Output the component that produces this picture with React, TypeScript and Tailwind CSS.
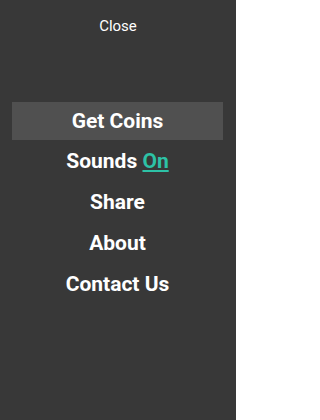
import { useState } from 'react';

const items = ['Get Coins', 'Sounds', 'Share', 'About', 'Contact Us'];

export default function App() {
    const [soundOn, setSoundOn] = useState(true);

    return (
        <div className="w-[236px] h-[420px] bg-[#383838] flex flex-col text-white font-['Roboto',sans-serif]">
            {/* Close */}
            <button className="mt-[16px] h-[20px] leading-[20px] text-[15px] self-center">Close</button>

            {/* Menu */}
            <div className="mt-[66px] ml-[12px] w-[211px] flex flex-col gap-[2.75px]">
                {items.map((item, idx) => (
                    <div
                        key={item}
                        className={`h-[38px] flex items-center justify-center text-[21px] leading-[24px] font-bold pb-[1px] ${idx === 0 ? 'bg-[#505050]' : ''}`}
                        onClick={() => item === 'Sounds' && setSoundOn(!soundOn)}
                    >
                        {item === 'Sounds' ? (
                            <span>
                                Sounds <span className="text-[#2dc2a6] underline underline-offset-2">{soundOn ? 'On' : 'Off'}</span>
                            </span>
                        ) : (
                            item
                        )}
                    </div>
                ))}
            </div>
        </div>
    );
}
